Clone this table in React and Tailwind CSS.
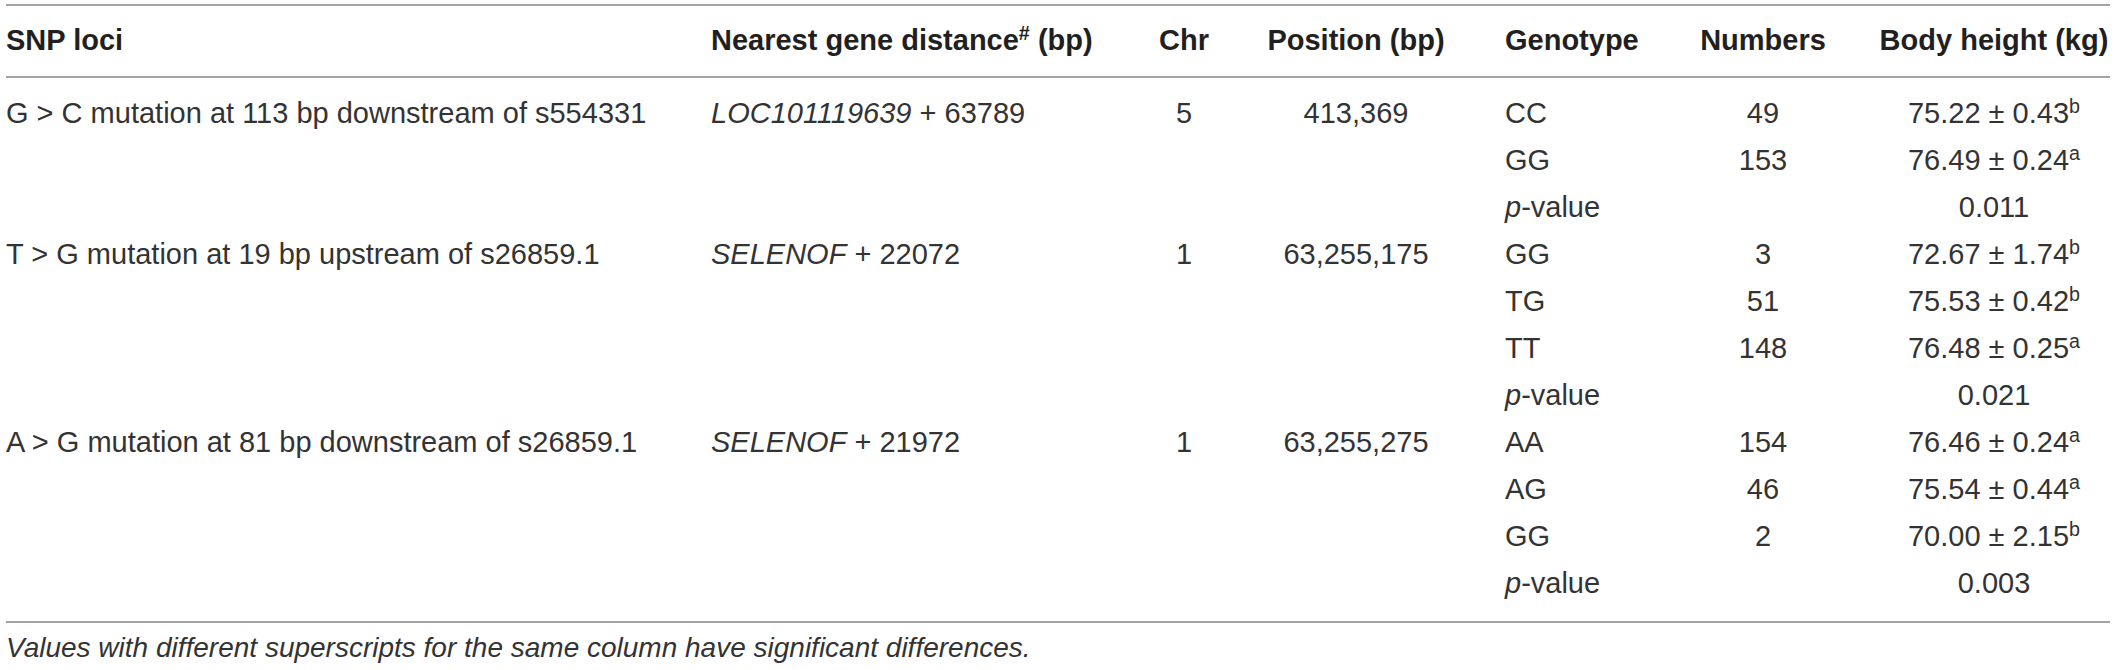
import React from "react";

const cols = "grid grid-cols-[705px_419px_108px_236px_226px_126px_284px] items-center";

const groups = [
  {
    snp: "G > C mutation at 113 bp downstream of s554331",
    gene: "LOC101119639",
    dist: "63789",
    chr: "5",
    pos: "413,369",
    rows: [
      { g: "CC", n: "49", v: "75.22 ± 0.43", s: "b" },
      { g: "GG", n: "153", v: "76.49 ± 0.24", s: "a" },
      { p: "0.011" },
    ],
  },
  {
    snp: "T > G mutation at 19 bp upstream of s26859.1",
    gene: "SELENOF",
    dist: "22072",
    chr: "1",
    pos: "63,255,175",
    rows: [
      { g: "GG", n: "3", v: "72.67 ± 1.74", s: "b" },
      { g: "TG", n: "51", v: "75.53 ± 0.42", s: "b" },
      { g: "TT", n: "148", v: "76.48 ± 0.25", s: "a" },
      { p: "0.021" },
    ],
  },
  {
    snp: "A > G mutation at 81 bp downstream of s26859.1",
    gene: "SELENOF",
    dist: "21972",
    chr: "1",
    pos: "63,255,275",
    rows: [
      { g: "AA", n: "154", v: "76.46 ± 0.24", s: "a" },
      { g: "AG", n: "46", v: "75.54 ± 0.44", s: "a" },
      { g: "GG", n: "2", v: "70.00 ± 2.15", s: "b" },
      { p: "0.003" },
    ],
  },
];

const Row = ({ group, row, first }) => (
  <div className={`${cols} h-[47px] leading-[47px] whitespace-nowrap`}>
    <div>{first ? group.snp : ""}</div>
    <div>
      {first && (
        <>
          <i>{group.gene}</i> + {group.dist}
        </>
      )}
    </div>
    <div className="text-center">{first ? group.chr : ""}</div>
    <div className="text-center">{first ? group.pos : ""}</div>
    <div className="pl-[31px]">
      {row.p ? (
        <>
          <i>p</i>-value
        </>
      ) : (
        row.g
      )}
    </div>
    <div className="text-center">{row.n || ""}</div>
    <div className="pl-[52px] text-center">
      {row.p ? (
        row.p
      ) : (
        <>
          {row.v}
          <sup className="text-[0.68em]">{row.s}</sup>
        </>
      )}
    </div>
  </div>
);

export default function App() {
  return (
    <div
      className="w-[2118px] h-[670px] bg-white pt-[4px] pl-[6px] text-[29px] text-[#333333]"
      style={{ fontFamily: '"Liberation Sans", Arial, sans-serif' }}
    >
      <div className="w-[2104px]">
        {/* header */}
        <div
          className={`${cols} h-[74px] border-y-2 border-[#a3a3a3] font-bold text-[#231f20] whitespace-nowrap`}
        >
          <div>SNP loci</div>
          <div>
            Nearest gene distance<sup className="text-[0.68em]">#</sup> (bp)
          </div>
          <div className="text-center">Chr</div>
          <div className="text-center">Position (bp)</div>
          <div className="pl-[31px]">Genotype</div>
          <div className="text-center">Numbers</div>
          <div className="pl-[52px] text-center">Body height (kg)</div>
        </div>

        {/* body */}
        <div className="pt-[12px] pb-[14px] border-b-2 border-[#a3a3a3]">
          {groups.map((group, gi) =>
            group.rows.map((row, ri) => (
              <Row key={`${gi}-${ri}`} group={group} row={row} first={ri === 0} />
            ))
          )}
        </div>

        {/* footnote */}
        <p className="mt-[8px] leading-[34px] text-[28px] italic">
          Values with different superscripts for the same column have significant differences.
        </p>
      </div>
    </div>
  );
}
